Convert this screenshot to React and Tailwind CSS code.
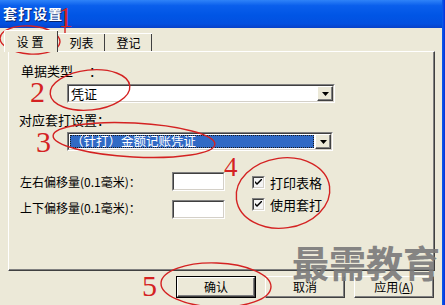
import React from "react";

const font = "font-['SimSun','Noto_Sans_CJK_SC',sans-serif]";

const Arrow = () => (
  <svg width="7" height="4" viewBox="0 0 7 4">
    <path d="M0 0h7L3.5 4z" fill="#000" />
  </svg>
);

const DropButton = () => (
  <div className="w-[16px] h-full bg-[#ECE9D8] border border-t-white border-l-white border-r-[#404040] border-b-[#404040] shadow-[inset_-1px_-1px_0_#808080] flex items-center justify-center">
    <Arrow />
  </div>
);

const Sunken = ({ className = "", children }) => (
  <div
    className={`border border-t-[#808080] border-l-[#808080] border-r-white border-b-white ${className}`}
  >
    <div className="w-full h-full border border-t-[#404040] border-l-[#404040] border-r-[#D4D0C8] border-b-[#D4D0C8] bg-white flex items-stretch">
      {children}
    </div>
  </div>
);

const Check = ({ label }) => (
  <div className="flex items-center h-[13px]">
    <div className="w-[13px] h-[13px] border border-t-[#808080] border-l-[#808080] border-r-white border-b-white">
      <div className="w-full h-full border border-t-[#404040] border-l-[#404040] border-r-[#D4D0C8] border-b-[#D4D0C8] bg-[#f4f4f4] flex items-center justify-center">
        <svg width="7" height="7" viewBox="0 0 7 7">
          <path d="M0 2v2l2 2 5-5V-1L2 4z" fill="#000" />
        </svg>
      </div>
    </div>
    <span className="ml-[5px] text-[13px] leading-[14px]">{label}</span>
  </div>
);

const Button = ({ children, isDefault }) => (
  <div className={`w-[80px] h-[22px] ${isDefault ? "border border-black" : ""}`}>
    <div className="w-full h-full bg-[#ECE9D8] border border-t-white border-l-white border-r-[#404040] border-b-[#404040] shadow-[inset_-1px_-1px_0_#808080] flex items-center justify-center text-[12px]">
      {children}
    </div>
  </div>
);

// red hand-drawn markers laid over the dialog
const Annotations = () => (
  <svg
    className="absolute inset-0 pointer-events-none"
    width="445"
    height="305"
    viewBox="0 0 445 305"
  >
    <g fill="none" stroke="#D42222" strokeWidth="1.4">
      <ellipse cx="30" cy="40" rx="30" ry="14" transform="rotate(4 30 40)" />
      <ellipse cx="90" cy="90" rx="40" ry="20" transform="rotate(-6 90 90)" />
      <ellipse cx="134" cy="140" rx="81" ry="17" transform="rotate(3 134 140)" />
      <ellipse cx="283" cy="193" rx="47" ry="35" transform="rotate(-8 283 193)" />
      <ellipse cx="216" cy="285" rx="55" ry="22" transform="rotate(2 216 285)" />
      <path d="M65 27v6" />
    </g>
    <g fill="#D42222" fontFamily="'Liberation Serif', serif">
      <text x="58" y="27" fontSize="30">1</text>
      <text x="30" y="102" fontSize="30">2</text>
      <text x="36" y="152" fontSize="30">3</text>
      <text x="224" y="176" fontSize="27">4</text>
      <text x="142" y="296" fontSize="30">5</text>
    </g>
  </svg>
);

export default function App() {
  return (
    <div className={`relative w-[445px] h-[305px] overflow-hidden bg-[#ECE9D8] flex text-black ${font}`}>
      <div className="w-[442px] flex flex-col">
        {/* title bar */}
        <div className="h-[28px] bg-[linear-gradient(180deg,#2F83F8_0%,#0A5FEC_20%,#0055E5_55%,#0350E0_85%,#0841C8_100%)] flex items-center pl-[3px] pb-[2px]">
          <span className="text-white font-bold text-[14px] tracking-[1px] [text-shadow:1px_1px_0_#0A246A]">
            套打设置
          </span>
        </div>

        {/* tabs */}
        <div className="h-[23px] flex items-end pl-[4px] text-[12px]">
          <div className="relative z-10 -mb-px w-[54px] h-[22px] bg-[#ECE9D8] border-t border-l border-white rounded-tl-[2px] shadow-[inset_-1px_0_0_#404040] flex items-center justify-center tracking-[3px]">
            设置
          </div>
          <div className="w-[47px] h-[18px] border-t border-white shadow-[inset_-1px_0_0_#404040] flex items-center justify-center">
            列表
          </div>
          <div className="w-[47px] h-[18px] border-t border-white shadow-[inset_-1px_0_0_#404040] flex items-center justify-center">
            登记
          </div>
        </div>

        {/* panel */}
        <div className="ml-[8px] w-[427px] h-[220px] border border-t-white border-l-white border-r-[#404040] border-b-[#404040] shadow-[inset_-1px_-1px_0_#808080] flex flex-col text-[12px]">
          <div className="mt-[12px] ml-[12px] h-[14px] leading-[14px] text-[13px]">
            单据类型<span className="ml-[16px]">：</span>
          </div>
          <Sunken className="mt-[6px] ml-[58px] w-[268px] h-[19px]">
            <div className="flex-1 pl-[2px] flex items-center text-[13px]">凭证</div>
            <DropButton />
          </Sunken>
          <div className="mt-[10px] ml-[10px] h-[14px] leading-[14px] text-[13px]">
            对应套打设置：
          </div>
          <Sunken className="mt-[5px] ml-[58px] w-[266px] h-[19px]">
            <div className="flex-1 p-[1px] flex">
              <div className="flex-1 bg-[#316AC5] outline-dotted outline-1 outline-[#1a1a1a] -outline-offset-1 text-white flex items-center pl-[1px] text-[12.5px]">
                （针打）金额记账凭证
              </div>
            </div>
            <DropButton />
          </Sunken>

          <div className="mt-[21px] flex">
            <div className="flex flex-col gap-[9px]">
              <div className="flex items-center h-[19px]">
                <span className="ml-[11px] w-[152px] text-[12px]">左右偏移量(0.1毫米)：</span>
                <Sunken className="w-[53px] h-[19px]" />
              </div>
              <div className="flex items-start h-[19px]">
                <span className="ml-[11px] w-[152px] text-[12px] -mt-[1px]">上下偏移量(0.1毫米)：</span>
                <Sunken className="w-[53px] h-[19px]" />
              </div>
            </div>
            <div className="ml-[27px] mt-[4px] flex flex-col gap-[9px]">
              <Check label="打印表格" />
              <Check label="使用套打" />
            </div>
          </div>
        </div>

        {/* buttons */}
        <div className="mt-[5px] pl-[176px] flex gap-[9px]">
          <Button isDefault>确认</Button>
          <Button>取消</Button>
          <Button>
            应用(<span className="underline">A</span>)
          </Button>
        </div>
      </div>
      <div className="w-[3px] bg-[linear-gradient(90deg,#0A5FEC,#0831D9)]" />

      {/* watermark */}
      <div className="absolute left-[292px] top-[240px] text-[37px] leading-[44px] font-bold text-[#7a7a7a] opacity-90 font-['Noto_Sans_CJK_SC',sans-serif] pointer-events-none">
        最需教育
      </div>

      <Annotations />
    </div>
  );
}
